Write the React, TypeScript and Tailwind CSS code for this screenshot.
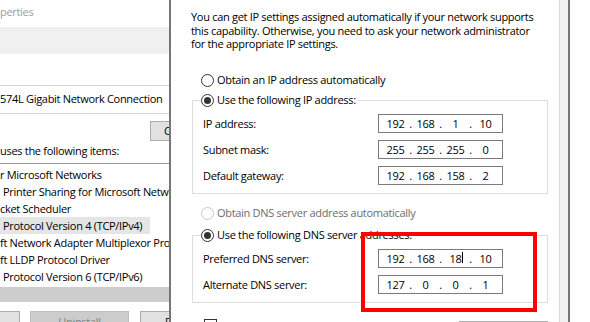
import { Fragment, ReactNode } from 'react';

function Radio({ checked = false, disabled = false }: { checked?: boolean; disabled?: boolean }) {
  return (
    <span
      className={`flex items-center justify-center w-[13px] h-[13px] rounded-full border bg-white shrink-0 ${
        disabled ? 'border-[#c8c8c8]' : 'border-[#333333]'
      }`}
    >
      {checked && <span className="w-[7px] h-[7px] rounded-full bg-[#333333]" />}
    </span>
  );
}

interface IpBoxProps {
  octets: string[];
  cursor?: number;
}

function IpBox({ octets, cursor }: IpBoxProps) {
  return (
    <div className="flex items-center w-[125px] h-[19px] border border-[#7a7a7a] bg-white pl-[4px]">
      {octets.map((octet, i) => (
        <Fragment key={i}>
          <span className="w-[25px] text-center">
            <span className="relative">
              {octet}
              {cursor === i && (
                <span className="absolute right-[-2px] top-[1px] w-[1px] h-[11px] bg-black" />
              )}
            </span>
          </span>
          {i < 3 && <span className="w-[5px] text-center">.</span>}
        </Fragment>
      ))}
    </div>
  );
}

function IpRow({ label, octets, cursor }: { label: string } & IpBoxProps) {
  return (
    <div className="flex items-center">
      <span className="w-[185px] pl-[10px]">{label}</span>
      <IpBox octets={octets} cursor={cursor} />
    </div>
  );
}

function GroupBox({ legend, children }: { legend: string; children: ReactNode }) {
  return (
    <fieldset className="ml-[21px] w-[356px] border border-[#dcdcdc] pb-[8px]">
      <legend className="ml-[8px] pr-[2px] bg-white">
        <span className="flex items-center gap-[3px] h-[16px]">
          <Radio checked />
          <span className="whitespace-nowrap">{legend}</span>
        </span>
      </legend>
      <div className="flex flex-col gap-[7px] pt-[6px]">{children}</div>
    </fieldset>
  );
}

const items = [
  { text: 'r Microsoft Networks', indent: false },
  { text: 'Printer Sharing for Microsoft Networks', indent: true },
  { text: 'cket Scheduler', indent: false },
  { text: 'Protocol Version 4 (TCP/IPv4)', indent: true, selected: true },
  { text: 'ft Network Adapter Multiplexor Protocol', indent: false },
  { text: 'ft LLDP Protocol Driver', indent: false },
  { text: 'Protocol Version 6 (TCP/IPv6)', indent: true },
];

function AdapterWindow() {
  return (
    <div className="w-[169px] shrink-0 overflow-hidden whitespace-nowrap">
      <div className="h-[27px] pt-[4px] leading-[16px] text-[#9d9d9d]">perties</div>
      <div className="h-[27px] bg-[#f0f0f0]" />
      <div className="mt-[31px] h-[29px] border-y border-[#d4d4d4] flex items-center">
        574L Gigabit Network Connection
      </div>
      <div className="mt-[7px] flex justify-end">
        <div className="w-[19px] h-[20px] border-y border-l border-[#adadad] bg-[#e1e1e1] pl-[13px] leading-[18px]">
          C
        </div>
      </div>
      <div className="mt-[2px] leading-[16px]">uses the following items:</div>
      <div className="mt-[4px] border-t border-[#9a9a9a] pt-[2px]">
        {items.map((item) => (
          <div
            key={item.text}
            className={`h-[17px] leading-[17px] ${item.indent ? 'pl-[3px]' : ''} ${
              item.selected ? 'w-[150px] bg-[#e5e5e5]' : ''
            }`}
          >
            {item.text}
          </div>
        ))}
        <div className="mt-[2px] h-[15px] bg-[#cdcdcd]" />
      </div>
      <div className="mt-[9px] flex">
        <div className="w-[20px] h-[22px] shrink-0 border-y border-r border-[#adadad] bg-[#e1e1e1]" />
        <div className="ml-[10px] w-[99px] h-[22px] shrink-0 border border-[#bfbfbf] bg-[#cccccc] text-center leading-[20px] text-[#838383]">
          Uninstall
        </div>
        <div className="ml-[11px] flex-1 h-[22px] border-y border-l border-[#adadad] bg-[#e1e1e1] pl-[24px] leading-[20px]">
          P
        </div>
      </div>
    </div>
  );
}

function IpDialog() {
  return (
    <div className="w-[388px] shrink-0 leading-[16px] whitespace-nowrap">
      <p className="h-[52px] pt-[10px] pl-[20px] leading-[13.5px]">
        You can get IP settings assigned automatically if your network supports
        <br />
        this capability. Otherwise, you need to ask your network administrator
        <br />
        for the appropriate IP settings.
      </p>
      <div className="mt-[20px] h-[16px] pl-[30px] flex items-center gap-[3px]">
        <Radio />
        <span>Obtain an IP address automatically</span>
      </div>
      <div className="mt-[4px]">
        <GroupBox legend="Use the following IP address:">
          <IpRow label="IP address:" octets={['192', '168', '1', '10']} />
          <IpRow label="Subnet mask:" octets={['255', '255', '255', '0']} />
          <IpRow label="Default gateway:" octets={['192', '168', '158', '2']} />
        </GroupBox>
      </div>
      <div className="mt-[11px] h-[16px] pl-[30px] flex items-center gap-[3px] text-[#6d6d6d]">
        <Radio disabled />
        <span>Obtain DNS server address automatically</span>
      </div>
      <div className="mt-[6px]">
        <GroupBox legend="Use the following DNS server addresses:">
          <IpRow label="Preferred DNS server:" octets={['192', '168', '18', '10']} cursor={2} />
          <IpRow label="Alternate DNS server:" octets={['127', '0', '0', '1']} />
        </GroupBox>
      </div>
      <div className="mt-[16px] flex items-start">
        <span className="ml-[33px] w-[13px] h-[13px] shrink-0 border border-[#333333] bg-white" />
        <span className="ml-[242px] mt-[2px] w-[89px] h-[20px] shrink-0 border border-[#adadad] bg-[#e1e1e1]" />
      </div>
    </div>
  );
}

export default function App() {
  return (
    <div className="relative flex w-[590px] h-[322px] overflow-hidden bg-white text-[11px] tracking-[-0.3px] text-black font-['Open_Sans',sans-serif]">
      <AdapterWindow />
      <div className="w-[2px] shrink-0 bg-[#767676]" />
      <IpDialog />
      <div className="w-[9px] shrink-0 border-l border-[#d9d9d9] bg-[#f0f0f0]" />
      <div className="w-[2px] shrink-0 bg-[#767676]" />
      <div className="flex-1" />
      <div className="absolute left-[361px] top-[232px] w-[176px] h-[80px] border-[4px] border-[#ff0000]" />
    </div>
  );
}
